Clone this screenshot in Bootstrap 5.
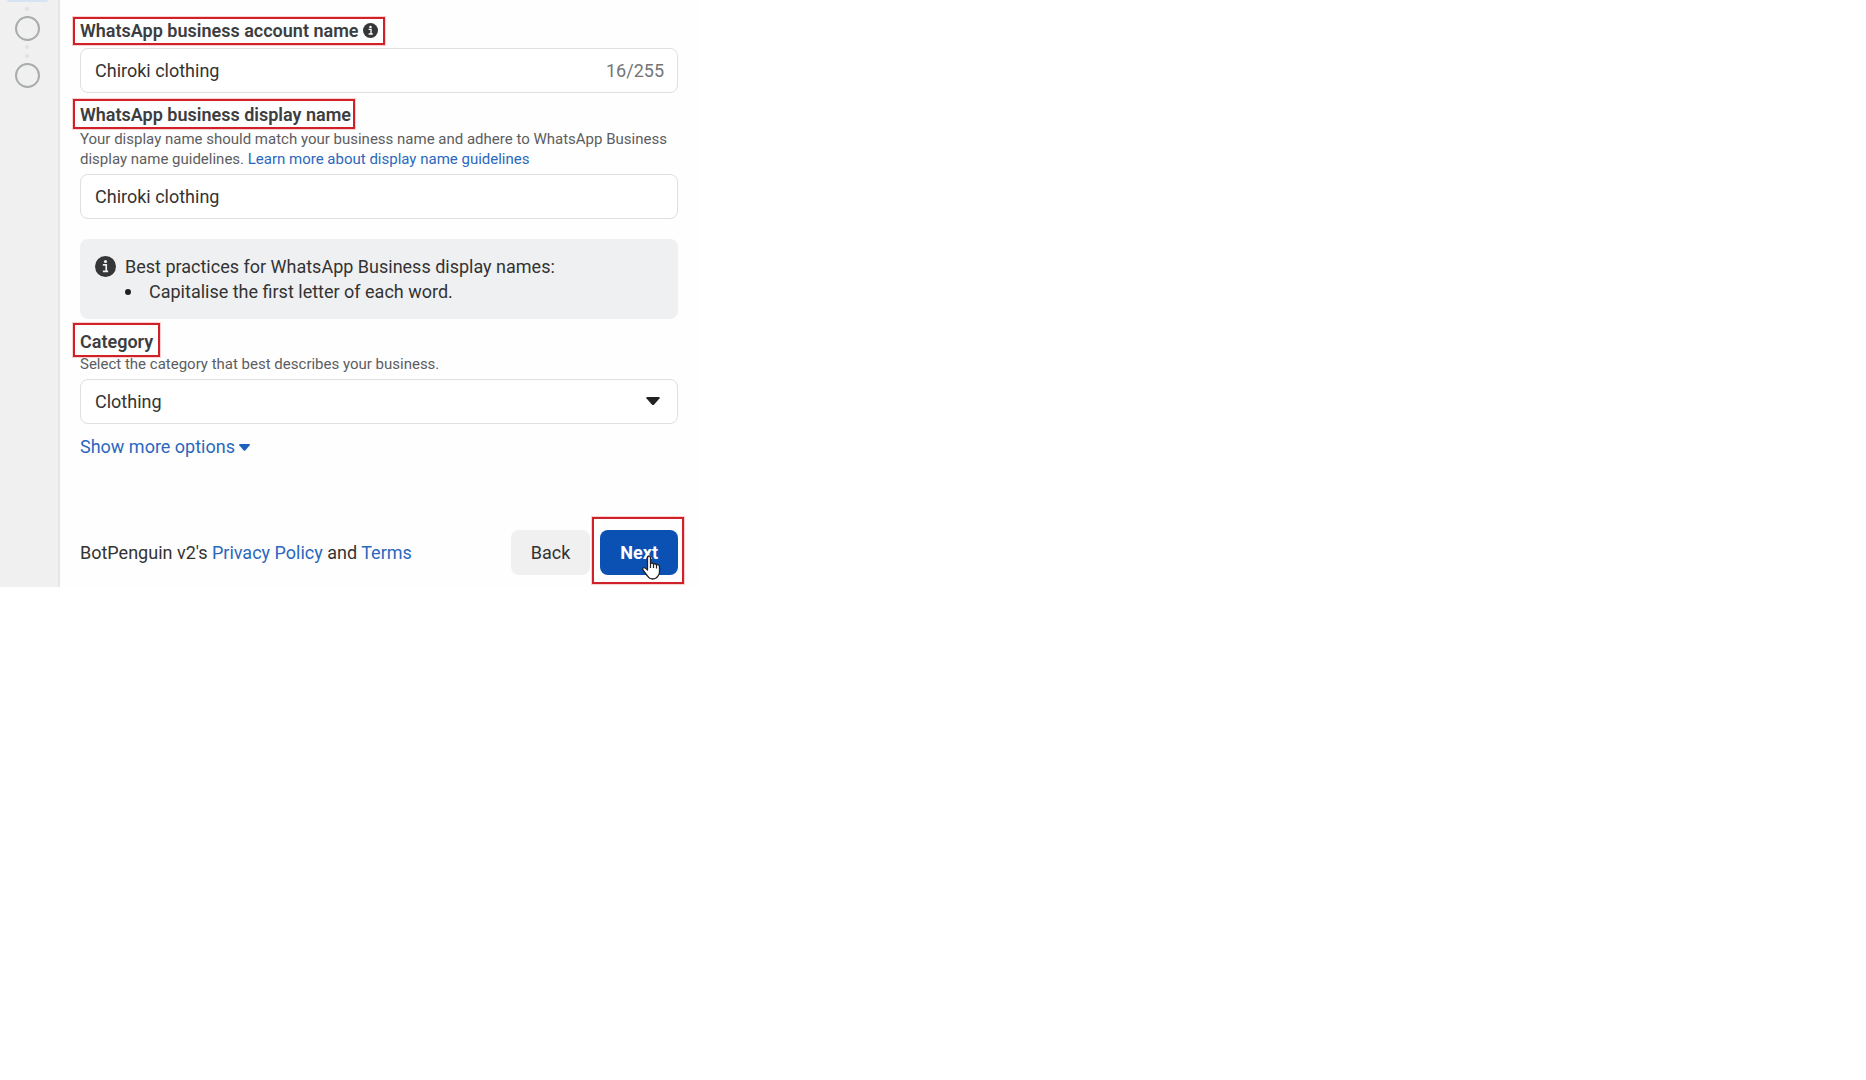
<!DOCTYPE html>
<html lang="en">
<head>
<meta charset="utf-8">
<meta name="viewport" content="width=device-width, initial-scale=1">
<title>WhatsApp business account</title>
<link href="https://cdn.jsdelivr.net/npm/bootstrap@5.3.0/dist/css/bootstrap.min.css" rel="stylesheet">
<style>
  body { font-family: Roboto, "Liberation Sans", sans-serif; font-size: 18px; line-height: 24px; color: #333; background: #fff; }
  a { color: #2a68bd; text-decoration: none; }
  .setup { max-width: 700px; background: #fefefe; }
  .rail { width: 60px; background: #f0f0f0; border-right: 2px solid #e6e6e7; padding-right: 4px; }
  .rail-tab { width: 41px; height: 2px; background: #d6e3f2; border-radius: 0 0 6px 6px; }
  .rail-dot { width: 4px; height: 4px; border-radius: 50%; background: #e0e1e1; margin-top: 5px; }
  .rail-step { width: 25px; height: 25px; border-radius: 50%; border: 2px solid #a9acac; margin-top: 5px; }
  .pane { padding: 17px 22px 12px 20px; }
  .marked { border: 2px solid #d02028; box-shadow: 0 0 0 1px #fbd0d0; padding: 0 2px 0 5px; margin-left: -7px; font-weight: 600; color: #3c3d3f; line-height: 24px; }
  .marked-wide { padding-right: 5px; }
  .marked-low { padding-top: 2px; }
  .marked-tall { padding: 5px 5px 1px 5px; }
  .info-sm { margin-top: -3px; }
  .field-row { margin-top: 3px; margin-bottom: 6px; }
  .hint { font-size: 15px; line-height: 20px; color: #5c5d5f; margin-bottom: 5px; }
  .hint-close { margin-top: -3px; }
  .field, .field:focus { height: 45px; padding: 0 14px; font-size: 18px; color: #333; border: 1px solid #dedfe0; border-radius: 8px; background-color: #fff; box-shadow: none; }
  select.field { background-image: url("data:image/svg+xml,%3Csvg xmlns='http://www.w3.org/2000/svg' viewBox='0 0 14 9'%3E%3Cpath d='M1 0h12q1 .2.6 1.2L8.2 7.4q-1.200 1.200-2.400 0L.4 1.200Q0 .2 1 0z' fill='%23222'/%3E%3C/svg%3E"); background-size: 14px 9px; background-position: right 17px center; }
  .counter { right: 14px; top: 11px; color: #737577; }
  .tips { background: #eff0f2; border-radius: 8px; padding: 15px; margin-top: 20px; line-height: 25px; gap: 9px; }
  .tips li { display: flex; align-items: center; }
  .tips li::before { content: ""; width: 6px; height: 6px; border-radius: 50%; background: #222; margin-right: 18px; }
  .info-lg { margin-top: 2px; }
  .more { margin-top: 11px; }
  .foot { margin-top: 71px; }
  .foot .btn { height: 45px; padding: 0 20px; font-size: 18px; border: 0; border-radius: 8px; }
  .btn-back { background: #f0f0f0; color: #333; }
  .btn-next { background: #0b51b4; color: #fff; font-weight: 700; }
  .next-mark { border: 2px solid #d02028; box-shadow: 0 0 0 1px #fbd0d0; padding: 11px 4px 7px 6px; margin: -13px -6px -9px 2px; }
  .pointer { left: 48px; top: 36px; }
</style>
<script src="https://cdn.jsdelivr.net/npm/bootstrap@5.3.0/dist/js/bootstrap.bundle.min.js"></script>
</head>
<body>
<main class="setup d-flex">
  <aside class="rail d-flex flex-column align-items-center flex-shrink-0">
    <div class="rail-tab"></div>
    <div class="rail-dot"></div>
    <div class="rail-step"></div>
    <div class="rail-dot mt-1"></div>
    <div class="rail-dot"></div>
    <div class="rail-step"></div>
  </aside>
  <form class="pane flex-grow-1">
    <div class="d-flex"><label class="marked marked-wide" for="account">WhatsApp business account name
      <svg width="15" height="15" viewBox="0 0 20 20" class="info-sm" aria-hidden="true"><circle cx="10" cy="10" r="10" fill="#353638"/><circle cx="10" cy="5.200" r="1.700" fill="#fff"/><path d="M7.500 8.500h3.200v6M7.500 14.700h5.500" fill="none" stroke="#fff" stroke-width="1.800"/></svg>
    </label></div>
    <div class="field-row position-relative">
      <input id="account" class="form-control field" value="Chiroki clothing">
      <span class="counter position-absolute">16/255</span>
    </div>
    <div class="d-flex"><label class="marked marked-low" for="display">WhatsApp business display name</label></div>
    <p class="hint">Your display name should match your business name and adhere to WhatsApp Business display name guidelines. <a href="#">Learn more about display name guidelines</a></p>
    <input id="display" class="form-control field" value="Chiroki clothing">
    <div class="tips d-flex align-items-start">
      <svg width="21" height="21" viewBox="0 0 20 20" class="info-lg flex-shrink-0" aria-hidden="true"><circle cx="10" cy="10" r="10" fill="#353638"/><circle cx="10" cy="5.200" r="1.500" fill="#eee"/><path d="M7.500 8.500h3.200v6M7.500 14.700h5" fill="none" stroke="#eee" stroke-width="1.600"/></svg>
      <div>Best practices for WhatsApp Business display names:
        <ul class="list-unstyled mb-0"><li>Capitalise the first letter of each word.</li></ul>
      </div>
    </div>
    <div class="d-flex mt-1"><label class="marked marked-tall" for="category">Category</label></div>
    <p class="hint hint-close">Select the category that best describes your business.</p>
    <select id="category" class="form-select field"><option>Clothing</option></select>
    <div class="more"><a href="#">Show more options
      <svg width="11" height="8" viewBox="0 0 11 8" aria-hidden="true"><path d="M.8 0h9.400q1 .2.5 1.200L6.500 6.200q-1 1-2 0L.3 1.200Q-.2.2.8 0z" fill="#1c62be"/></svg></a></div>
    <div class="foot d-flex align-items-center">
      <div class="me-auto">BotPenguin v2's <a href="#">Privacy Policy</a> and <a href="#">Terms</a></div>
      <button type="button" class="btn btn-back">Back</button>
      <div class="next-mark position-relative">
        <button type="button" class="btn btn-next">Next</button>
        <svg class="pointer position-absolute" width="19" height="25" viewBox="0 0 19 25" aria-hidden="true"><path d="M5.500 14V3Q5.500 1 7 1t1.500 2v5.500Q10.500 7.500 11.500 9q2-.8 3 .7 3-.5 3 2.300v5q0 2.500-1.500 4-1.800 3-5.500 3-3 0-5-3L1.300 15.500Q0 13.500 1.500 12.700q1.500-.6 4 2.300z" fill="#fff" stroke="#222" stroke-width="1.300" stroke-linejoin="round"/><path d="M8.500 8.500V13M11.500 9v4M14.500 10v3.500" stroke="#222" stroke-width="1.200" fill="none"/></svg>
      </div>
    </div>
  </form>
</main>
</body>
</html>
